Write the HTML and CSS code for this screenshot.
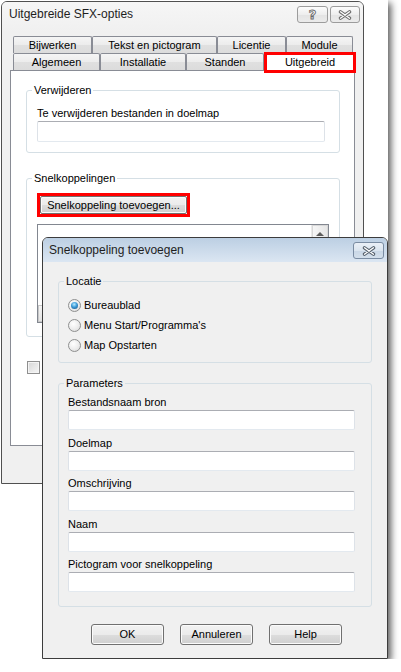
FILE: index.html
```html
<!DOCTYPE html>
<html>
<head>
<meta charset="utf-8">
<link rel="stylesheet" href="styles.css">
</head>
<body>
<div class="desk">
  <div class="win win1">
    <div class="titlebar tb1">
      <span class="title">Uitgebreide SFX-opties</span>
      <div class="tbtns">
        <span class="tbtn tbtn-help"><span class="qm">?</span></span>
        <span class="tbtn tbtn-close">
          <svg width="14" height="10" viewBox="0 0 14 10"><path d="M2.5 1.8 L11.5 8.2 M11.5 1.8 L2.5 8.2" stroke="#6e6e6e" stroke-width="3.4" stroke-linecap="round" fill="none"/><path d="M2.5 1.8 L11.5 8.2 M11.5 1.8 L2.5 8.2" stroke="#fff" stroke-width="1.4" stroke-linecap="round" fill="none"/></svg>
        </span>
      </div>
    </div>
    <div class="tabrow tabrow-back">
      <span class="tab w-bij">Bijwerken</span>
      <span class="tab w-tek">Tekst en pictogram</span>
      <span class="tab w-lic">Licentie</span>
      <span class="tab w-mod">Module</span>
    </div>
    <div class="tabrow tabrow-front">
      <span class="tab w-alg">Algemeen</span>
      <span class="tab w-ins">Installatie</span>
      <span class="tab w-sta">Standen</span>
      <span class="tab tab-sel">Uitgebreid</span>
    </div>
    <div class="panel">
      <fieldset class="group g-verw">
        <legend>Verwijderen</legend>
        <div class="lbl1">Te verwijderen bestanden in doelmap</div>
        <div class="edit e-verw"></div>
      </fieldset>
      <fieldset class="group g-snel">
        <legend>Snelkoppelingen</legend>
        <div class="hl-btn"><div class="btn btn-add">Snelkoppeling toevoegen...</div></div>
        <div class="listbox">
          <div class="lb-main"></div>
          <div class="vscroll"><div class="sb-up"><span class="tri"></span></div></div>
          <div class="hscroll"><div class="sb-left"></div></div>
          <div class="sb-corner"></div>
        </div>
      </fieldset>
      <div class="check"></div>
    </div>
  </div>

  <div class="win win2">
    <div class="titlebar tb2">
      <span class="title">Snelkoppeling toevoegen</span>
      <span class="tbtn tbtn-close2">
        <svg width="14" height="10" viewBox="0 0 14 10"><path d="M2.5 1.8 L11.5 8.2 M11.5 1.8 L2.5 8.2" stroke="#55606c" stroke-width="3.4" stroke-linecap="round" fill="none"/><path d="M2.5 1.8 L11.5 8.2 M11.5 1.8 L2.5 8.2" stroke="#fff" stroke-width="1.4" stroke-linecap="round" fill="none"/></svg>
      </span>
    </div>
    <fieldset class="group g-loc">
      <legend>Locatie</legend>
      <div class="radios">
        <div class="rrow"><span class="radio on"></span><span>Bureaublad</span></div>
        <div class="rrow"><span class="radio"></span><span>Menu Start/Programma's</span></div>
        <div class="rrow"><span class="radio"></span><span>Map Opstarten</span></div>
      </div>
    </fieldset>
    <fieldset class="group g-par">
      <legend>Parameters</legend>
      <div class="field"><div class="flbl">Bestandsnaam bron</div><div class="edit e-par"></div></div>
      <div class="field"><div class="flbl">Doelmap</div><div class="edit e-par"></div></div>
      <div class="field"><div class="flbl">Omschrijving</div><div class="edit e-par"></div></div>
      <div class="field"><div class="flbl">Naam</div><div class="edit e-par"></div></div>
      <div class="field"><div class="flbl">Pictogram voor snelkoppeling</div><div class="edit e-par"></div></div>
    </fieldset>
    <div class="btnrow">
      <div class="btn dbtn">OK</div>
      <div class="btn dbtn">Annuleren</div>
      <div class="btn dbtn">Help</div>
    </div>
  </div>
</div>
</body>
</html>
```

FILE: styles.css
```css
* { box-sizing: border-box; }
body {
  margin: 0;
  background: #fff;
  font-family: "Liberation Sans", Arial, sans-serif;
  font-size: 11px;
  color: #000;
}
.desk {
  position: relative;
  width: 388px;
  height: 659px;
  background: #fff;
  box-shadow: 3px 3px 7px rgba(0,0,0,0.65);
}
.win {
  position: absolute;
  border: 1px solid #505050;
  border-radius: 6px 6px 0 0;
  background: #f0f0f0;
  display: flex;
  flex-direction: column;
}
.win1 { left: 1px; top: 1px; width: 363px; height: 483px; }
.win2 { left: 42px; top: 237px; width: 346px; height: 422px; border-color: #3c3c3c; }

.titlebar {
  display: flex;
  justify-content: space-between;
  align-items: flex-start;
  flex: none;
}
.tb1 { height: 34px; border-radius: 5px 5px 0 0; background: linear-gradient(#f6f6f6, #f0f0f0 30px); }
.tb2 { height: 24px; border-radius: 5px 5px 0 0; background: linear-gradient(#bccfe3, #dbe6f2); }
.title { font-size: 12px; line-height: 15px; color: #1e1e1e; margin: 5px 0 0 7px; }
.tb2 .title { margin: 5px 0 0 6px; }
.tbtns { display: flex; gap: 2px; margin: 4px 3px 0 0; }
.tbtn {
  width: 30px; height: 17px;
  border: 1px solid #9c9c9c;
  border-radius: 3px;
  background: linear-gradient(#fcfcfc, #eeeeee 50%, #e3e3e3 51%, #ebebeb);
  display: flex; align-items: center; justify-content: center;
}
.tbtn-help { width: 31px; }
.qm {
  font-family: "DejaVu Sans", sans-serif;
  font-weight: bold;
  font-size: 13px;
  line-height: 13px;
  color: #fff;
  -webkit-text-stroke: 0.9px #6a6a6a;
}
.tbtn-close2 {
  width: 31px; height: 17px;
  margin: 4px 3px 0 0;
  border-color: #7a8ca2;
  background: linear-gradient(#eaf0f7, #dbe5ef 50%, #c9d7e6 51%, #d3dfeb);
}

/* tabs */
.tabrow { display: flex; align-items: flex-start; height: 17px; margin-left: 11px; flex: none; }
.tab {
  height: 17px;
  border: 1px solid #898c95;
  border-bottom: none;
  border-radius: 2px 2px 0 0;
  background: linear-gradient(#f5f5f5, #ececec 50%, #e0e0e0 51%, #dcdcdc);
  display: flex; align-items: center; justify-content: center;
  line-height: 13px;
  padding-top: 1px;
}
.tabrow-front { margin-top: 0; }
.tabrow-front .tab { height: 17px; }
.w-bij { width: 79px; } .w-tek { width: 125px; } .w-lic { width: 69px; } .w-mod { width: 67px; }
.w-alg { width: 87px; } .w-ins { width: 86px; } .w-sta { width: 78px; }
.tab-sel {
  position: relative; z-index: 2;
  width: 92px;
  height: 21px !important;
  margin-top: -1px;
  border: 3px solid #ff0000;
  border-radius: 0;
  background: #fff;
  align-items: flex-start;
  padding-top: 1px;
}
.panel {
  flex: none;
  margin-left: 8px;
  width: 345px;
  height: 376px;
  border: 1px solid #898c95;
  background: #fff;
  display: flex;
  flex-direction: column;
}

/* groupboxes */
.group {
  margin: 0;
  padding: 0;
  min-width: 0;
  border: 1px solid #d5dfe5;
  border-radius: 3px;
  display: flex;
  flex-direction: column;
  align-items: flex-start;
}
.group legend {
  padding: 0 2px;
  margin-left: 5px;
  line-height: 13px;
  font-size: 11px;
}
.g-verw { margin: 13px 0 0 15px; width: 314px; }
.g-snel { margin: 19px 0 0 15px; width: 314px; }
.lbl1 { margin: 10px 0 0 10px; line-height: 13px; }
.edit {
  background: #fff;
  border: 1px solid #dde2e8;
  border-top-color: #abadb3;
  border-bottom-color: #e3e9ef;
  border-radius: 2px;
}
.e-verw { margin: 1px 0 10px 10px; width: 288px; height: 21px; }
.hl-btn {
  margin: 8px 0 0 10px;
  width: 153px; height: 24px;
  border: 3px solid #ff0000;
  display: flex;
}
.btn {
  border: 1px solid #707070;
  border-radius: 3px;
  background: linear-gradient(#f2f2f2, #ebebeb 50%, #dddddd 51%, #cfcfcf);
  box-shadow: inset 0 0 0 1px #fbfbfb;
  display: flex; align-items: center; justify-content: center;
  line-height: 13px;
}
.btn-add { flex: 1; border-radius: 2px; }
.listbox {
  margin: 7px 0 13px 10px;
  width: 292px; height: 99px;
  border: 1px solid #828790;
  background: #fff;
  display: grid;
  grid-template-columns: 1fr 17px;
  grid-template-rows: 1fr 17px;
}
.vscroll { background: #f4f4f4; border-left: 1px solid #eaeaea; }
.sb-up {
  height: 17px;
  border: 1px solid #d8d8d8;
  background: linear-gradient(90deg, #f6f6f6, #e6e6e6);
  display: flex; align-items: center; justify-content: center;
}
.tri { width: 0; height: 0; border-left: 4px solid transparent; border-right: 4px solid transparent; border-bottom: 4px solid #5d5d5d; }
.hscroll { background: #f4f4f4; }
.sb-left { width: 17px; height: 17px; border: 1px solid #c8c8c8; background: linear-gradient(#f5f5f5, #e3e3e3); }
.sb-corner { background: #f0f0f0; }
.check {
  margin: 24px 0 0 16px;
  width: 13px; height: 13px;
  border: 1px solid #8f8f8f;
  background: linear-gradient(135deg, #d6d6d6, #f6f6f6);
  box-shadow: inset 0 0 0 1px #f4f4f4;
}

/* window 2 */
.g-loc { margin: 13px 0 0 15px; width: 314px; }
.radios { margin: 7px 0 7px 9px; display: flex; flex-direction: column; }
.rrow { height: 20px; display: flex; align-items: center; gap: 3px; line-height: 13px; }
.radio {
  width: 13px; height: 13px;
  border-radius: 50%;
  border: 1px solid #8e8f8f;
  background: radial-gradient(circle at 40% 35%, #ffffff, #ececec 55%, #d3d3d3);
  display: flex; align-items: center; justify-content: center;
}
.radio.on::after {
  content: "";
  width: 7px; height: 7px;
  border-radius: 50%;
  background: radial-gradient(circle at 45% 35%, #b8ecff, #3b9ad8 45%, #174d7c);
}
.g-par { margin: 14px 0 0 15px; width: 314px; }
.field { margin: 0 0 5.5px 9px; display: flex; flex-direction: column; }
.field:first-of-type { margin-top: 5px; }
.field:last-child { margin-bottom: 14px; }
.flbl { line-height: 14px; margin-bottom: 1px; }
.e-par { width: 287px; height: 20px; }
.btnrow { display: flex; gap: 16px; margin: 17px 0 0 48px; }
.dbtn { width: 73px; height: 21px; }
```
